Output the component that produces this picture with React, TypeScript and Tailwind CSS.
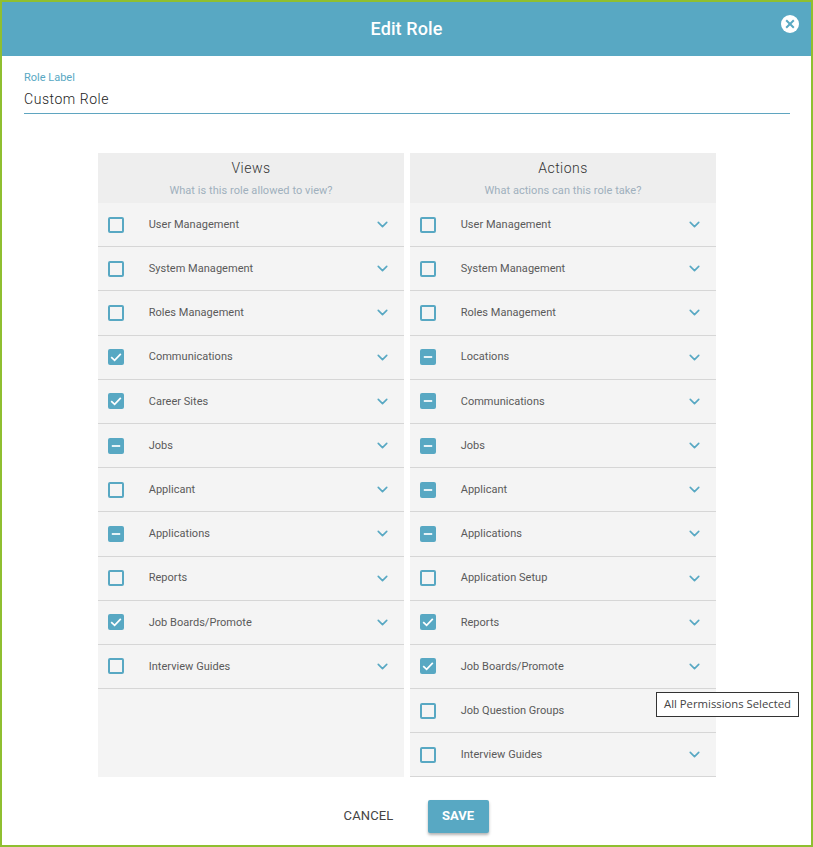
import { ChevronDown } from "lucide-react";

type Mark = "none" | "all" | "some";
type Row = { label: string; mark: Mark; noChevron?: boolean };

const views: Row[] = [
  { label: "User Management", mark: "none" },
  { label: "System Management", mark: "none" },
  { label: "Roles Management", mark: "none" },
  { label: "Communications", mark: "all" },
  { label: "Career Sites", mark: "all" },
  { label: "Jobs", mark: "some" },
  { label: "Applicant", mark: "none" },
  { label: "Applications", mark: "some" },
  { label: "Reports", mark: "none" },
  { label: "Job Boards/Promote", mark: "all" },
  { label: "Interview Guides", mark: "none" },
];

const actions: Row[] = [
  { label: "User Management", mark: "none" },
  { label: "System Management", mark: "none" },
  { label: "Roles Management", mark: "none" },
  { label: "Locations", mark: "some" },
  { label: "Communications", mark: "some" },
  { label: "Jobs", mark: "some" },
  { label: "Applicant", mark: "some" },
  { label: "Applications", mark: "some" },
  { label: "Application Setup", mark: "none" },
  { label: "Reports", mark: "all" },
  { label: "Job Boards/Promote", mark: "all" },
  { label: "Job Question Groups", mark: "none", noChevron: true },
  { label: "Interview Guides", mark: "none" },
];

function Checkbox({ mark }: { mark: Mark }) {
  if (mark === "none") {
    return <span className="h-4 w-4 shrink-0 rounded-[2px] border-2 border-[#58a8c3]" />;
  }
  return (
    <span className="flex h-4 w-4 shrink-0 items-center justify-center rounded-[2px] bg-[#58a8c3]">
      <svg viewBox="0 0 16 16" className="h-4 w-4" fill="none" stroke="white" strokeWidth="1.7">
        {mark === "all" ? <path d="M3.2 8.2 6.6 11.4 12.8 4.8" /> : <path d="M3.8 8h8.4" />}
      </svg>
    </span>
  );
}

function Column({ title, hint, rows }: { title: string; hint: string; rows: Row[] }) {
  return (
    <div className="w-[306px] bg-[#f4f4f4]">
      <div className="flex h-[50px] flex-col items-center bg-[#eeeeee] pt-[6px]">
        <div className="pl-px text-[14px] font-light leading-[18px] tracking-[0.45px] text-[#333333]">{title}</div>
        <div className="mt-[6px] pl-px text-[11px] leading-[16px] tracking-[0.05px] text-[#9fb0bd]">{hint}</div>
      </div>
      {rows.map((row) => (
        <div
          key={row.label}
          className="flex h-[44.2px] items-center border-b border-[#d6d6d6] pl-[10.4px] pr-[12.5px]"
        >
          <Checkbox mark={row.mark} />
          <span className="ml-[24.8px] flex-1 pt-px text-[11px] tracking-[0.03px] text-[#5a5a5a]">{row.label}</span>
          {!row.noChevron && <ChevronDown size={17} strokeWidth={2.3} className="text-[#58a8c3]" />}
        </div>
      ))}
    </div>
  );
}

export default function App() {
  return (
    <div className="relative flex h-[847px] w-[813px] flex-col border-2 border-[#8fbf30] bg-white font-['Roboto',sans-serif]">
      <header className="relative flex h-[54px] shrink-0 items-center justify-center bg-[#58a8c3] pb-[2px]">
        <h1 className="text-[18px] font-medium tracking-[0.1px] text-white">Edit Role</h1>
        <button className="absolute right-[12.4px] top-[12.8px] flex h-[18px] w-[18px] items-center justify-center rounded-full bg-white">
          <svg viewBox="0 0 18 18" className="h-[18px] w-[18px]" fill="none" stroke="#58a8c3" strokeWidth="2">
            <path d="M5.2 5.2 12.8 12.8M12.8 5.2 5.2 12.8" />
          </svg>
        </button>
      </header>

      <div className="ml-[22px] mr-[21px] mt-[15px] border-b border-[#5fa5c0] pb-[4px]">
        <div className="text-[11px] leading-[14px] text-[#58a8c3]">Role Label</div>
        <div className="mt-[4px] text-[14px] font-light leading-[20px] tracking-[0.55px] text-[#222222]">Custom Role</div>
      </div>

      <div className="mt-[39px] flex h-[624px] justify-center gap-[6px]">
        <Column title="Views" hint="What is this role allowed to view?" rows={views} />
        <Column title="Actions" hint="What actions can this role take?" rows={actions} />
      </div>

      <footer className="mt-[23px] flex items-center justify-center gap-[35px] pl-[19px]">
        <button className="pb-[2px] pl-px text-[13px] font-normal tracking-[0.15px] text-[#444444]">CANCEL</button>
        <button className="h-[33px] w-[61px] rounded-[2px] bg-[#58a8c3] pb-[2px] pr-[2px] text-[13px] font-bold text-white shadow-[0_2px_3px_rgba(0,0,0,0.3)]">
          SAVE
        </button>
      </footer>

      <div className="absolute left-[654px] top-[690px] flex h-[25px] w-[143px] items-center justify-center border border-[#333333] bg-white font-['Open_Sans',sans-serif] text-[11.3px] text-[#444444]">
        All Permissions Selected
      </div>
    </div>
  );
}
